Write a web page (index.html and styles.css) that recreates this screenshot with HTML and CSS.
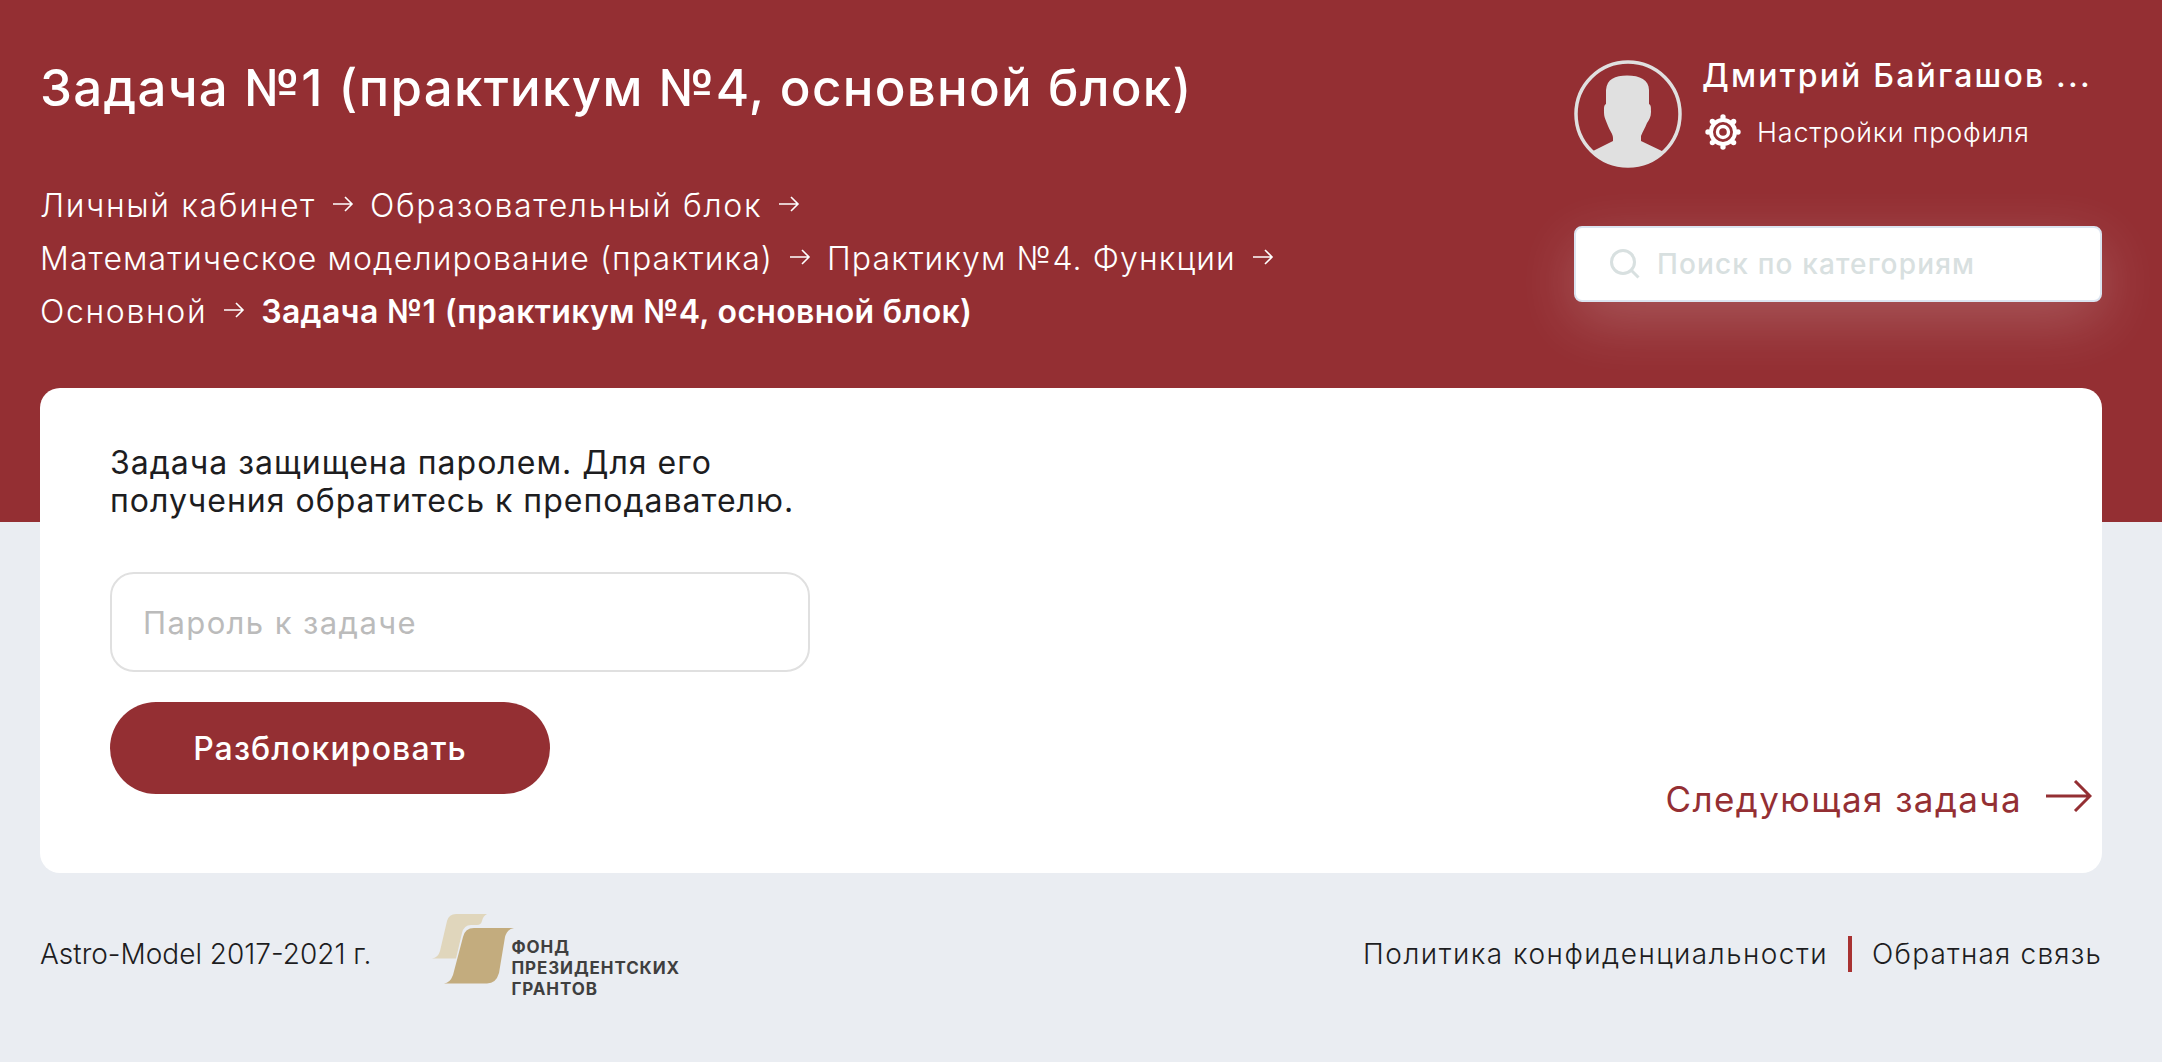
FILE: index.html
```html
<!DOCTYPE html>
<html lang="ru">
<head>
<meta charset="UTF-8" />
<meta name="viewport" content="width=device-width, initial-scale=1" />
<title>Задача №1 (практикум №4, основной блок)</title>
<link rel="stylesheet" href="styles.css">
</head>
<body>
<header class="top">
  <div class="top-left">
    <h1 class="page-title">Задача №1 (практикум №4, основной блок)</h1>
    <nav class="crumbs">
      <div class="crumb-row">
        <a class="crumb">Личный кабинет</a>
        <svg class="crumb-arrow" viewBox="0 0 22 18"><path d="M1 9h19M13 2l7 7-7 7"/></svg>
        <a class="crumb">Образовательный блок</a>
        <svg class="crumb-arrow" viewBox="0 0 22 18"><path d="M1 9h19M13 2l7 7-7 7"/></svg>
      </div>
      <div class="crumb-row crumb-row-long">
        <a class="crumb">Математическое моделирование (практика)</a>
        <svg class="crumb-arrow" viewBox="0 0 22 18"><path d="M1 9h19M13 2l7 7-7 7"/></svg>
        <a class="crumb">Практикум №4. Функции</a>
        <svg class="crumb-arrow" viewBox="0 0 22 18"><path d="M1 9h19M13 2l7 7-7 7"/></svg>
      </div>
      <div class="crumb-row">
        <a class="crumb">Основной</a>
        <svg class="crumb-arrow" viewBox="0 0 22 18"><path d="M1 9h19M13 2l7 7-7 7"/></svg>
        <span class="crumb crumb-current">Задача №1 (практикум №4, основной блок)</span>
      </div>
    </nav>
  </div>

  <div class="top-right">
    <div class="profile">
      <svg class="avatar" viewBox="0 0 108 108">
        <defs><clipPath id="avatarClip"><circle cx="54" cy="54" r="52"/></clipPath></defs>
        <path clip-path="url(#avatarClip)" d="M53 15.5C41 15.5 33 19 32 30V44C30 45 30 47 30 52C30 58 32 60 34 66C36 71 39 74 39 78V81L17 92L10 108H98L90 92L67 81V76C69 71 71 68 73 63C75 60 77 57 77 52C77 47 77 45 75 44V30C75 20 66 15.5 53 15.5Z"/>
        <circle class="avatar-ring" cx="54" cy="54" r="52"/>
      </svg>
      <div class="profile-info">
        <div class="profile-name">Дмитрий Байгашов ...</div>
        <a class="profile-link">
          <svg class="gear" viewBox="0 0 36 36">
            <circle class="gear-ring" cx="18" cy="18" r="12"/>
            <circle class="gear-ring gear-core" cx="18" cy="18" r="5.5"/>
            <g class="gear-teeth">
              <circle cx="18" cy="3" r="2.7"/><circle cx="18" cy="33" r="2.7"/>
              <circle cx="3" cy="18" r="2.7"/><circle cx="33" cy="18" r="2.7"/>
              <circle cx="7.4" cy="7.4" r="2.7"/><circle cx="28.6" cy="7.4" r="2.7"/>
              <circle cx="7.4" cy="28.6" r="2.7"/><circle cx="28.6" cy="28.6" r="2.7"/>
            </g>
          </svg>
          <span>Настройки профиля</span>
        </a>
      </div>
    </div>
    <label class="search">
      <svg class="search-icon" viewBox="0 0 30 30"><circle cx="13" cy="13" r="11.5"/><path d="M21.5 21.5l7 7"/></svg>
      <input class="search-input" type="text" placeholder="Поиск по категориям" />
    </label>
  </div>
</header>

<main class="card">
  <div class="unlock">
    <p class="unlock-text">Задача защищена паролем. Для его получения обратитесь к преподавателю.</p>
    <input class="unlock-input" type="password" placeholder="Пароль к задаче" />
    <button class="unlock-btn">Разблокировать</button>
  </div>
  <a class="next-link">
    <span>Следующая задача</span>
    <svg class="next-arrow" viewBox="0 0 46 32"><path d="M0 16h44M29 1l15 15-15 15"/></svg>
  </a>
</main>

<footer class="footer">
  <div class="footer-left">
    <span>Astro-Model 2017-2021 г.</span>
    <div class="fund">
      <svg class="fund-mark" viewBox="0 0 84 72">
        <path class="fund-light" d="M1 45.5Q7 45 9 38L16 8Q18 1 25 1H56Q52 3 51 8Q50 12 46 12H40Q33 12 31 20L25 45.5Z"/>
        <path class="fund-dark" d="M13 70.5Q19 70 22 62L32 24Q34 15 43 15H83Q76 16 74 24L68 60Q65 70.5 56 70.5Z"/>
      </svg>
      <div class="fund-name">ФОНД<br>ПРЕЗИДЕНТСКИХ<br>ГРАНТОВ</div>
    </div>
  </div>
  <div class="footer-right">
    <a class="footer-policy">Политика конфиденциальности</a>
    <span class="footer-sep"></span>
    <a>Обратная связь</a>
  </div>
</footer>
</body>
</html>
```

FILE: styles.css
```css
/* Basic reset */
* {
  box-sizing: border-box;
}

html, body {
  margin: 0;
  height: 100%;
}

body {
  font-family: Inter, "Noto Sans", Arial, sans-serif;
  color: #1d1d1f;
  background: linear-gradient(#942f33 522px, #eaedf2 522px);
}

a {
  color: inherit;
  text-decoration: none;
}

/* Red header */
.top {
  height: 388px;
  padding: 0 60px 0 40px;
  display: flex;
  justify-content: space-between;
  color: #fff;
}

.page-title {
  margin: 56px 0 0;
  font-size: 51px;
  line-height: 64px;
  font-weight: 500;
  letter-spacing: 1.28px;
}

.crumbs {
  margin-top: 59px;
  font-size: 32px;
  font-weight: 300;
  letter-spacing: 1.65px;
}

.crumb-row {
  height: 53px;
  display: flex;
  align-items: center;
  gap: 16px;
}

.crumb-row-long {
  letter-spacing: 1.1px;
}

.crumb-current {
  font-weight: 600;
  letter-spacing: 0.32px;
}

.crumb-arrow {
  width: 22px;
  height: 18px;
  margin-top: -4px;
  fill: none;
  stroke: #fff;
  stroke-width: 1.6;
}

/* Profile + search */
.top-right {
  width: 528px;
  padding-top: 60px;
}

.profile {
  display: flex;
  gap: 20px;
}

.avatar {
  width: 108px;
  height: 108px;
  fill: #e0e0e0;
}

.avatar-ring {
  fill: none;
  stroke: #e0e0e0;
  stroke-width: 3.5;
}

.profile-name {
  margin-top: -4px;
  font-size: 32px;
  line-height: 40px;
  font-weight: 500;
  letter-spacing: 2.2px;
}

.profile-link {
  margin-top: 18px;
  display: flex;
  align-items: center;
  gap: 16px;
  font-size: 27px;
  font-weight: 300;
  letter-spacing: 0.8px;
}

.gear {
  width: 36px;
  height: 36px;
  margin-left: 3px;
}

.gear-ring {
  fill: none;
  stroke: #fff;
  stroke-width: 4;
}

.gear-core {
  stroke-width: 3.4;
}

.gear-teeth {
  fill: #fff;
}

.search {
  height: 76px;
  margin-top: 58px;
  padding-left: 34px;
  display: flex;
  align-items: center;
  gap: 17px;
  background: #fff;
  border: 2px solid #dbe4f0;
  border-radius: 8px;
  box-shadow: 0 18px 60px rgba(255, 255, 255, 0.2);
}

.search-icon {
  width: 30px;
  height: 30px;
  flex-shrink: 0;
  fill: none;
  stroke: #d8e0e0;
  stroke-width: 3;
}

.search-input {
  flex-grow: 1;
  border: none;
  outline: none;
  padding: 0;
  font: 500 28px Inter, "Noto Sans", Arial, sans-serif;
  letter-spacing: 1.15px;
}

.search-input::placeholder {
  color: #d8e0e0;
  opacity: 1;
}

/* White card */
.card {
  height: 485px;
  margin: 0 60px 0 40px;
  padding: 56px 10px 50px 70px;
  display: flex;
  justify-content: space-between;
  align-items: flex-end;
  background: #fff;
  border-radius: 20px;
}

.unlock {
  width: 700px;
  align-self: flex-start;
}

.unlock-text {
  margin: 0;
  font-size: 32px;
  line-height: 38px;
  letter-spacing: 1px;
  color: #1d1d1f;
}

.unlock-input {
  display: block;
  width: 700px;
  height: 100px;
  margin-top: 52px;
  padding: 0 31px;
  border: 2px solid #e0e0e0;
  border-radius: 24px;
  outline: none;
  font: 400 31px Inter, "Noto Sans", Arial, sans-serif;
  letter-spacing: 1.4px;
}

.unlock-input::placeholder {
  color: #bbb;
  opacity: 1;
}

.unlock-btn {
  display: block;
  width: 440px;
  height: 92px;
  margin-top: 30px;
  border: none;
  border-radius: 46px;
  background: #942f33;
  color: #fff;
  font: 500 32px Inter, "Noto Sans", Arial, sans-serif;
  letter-spacing: 1.1px;
  cursor: pointer;
}

.next-link {
  margin-bottom: 2px;
  display: flex;
  align-items: center;
  gap: 24px;
  color: #942f33;
  font-size: 35px;
  line-height: 44px;
  letter-spacing: 1.4px;
}

.next-arrow {
  width: 46px;
  height: 32px;
  margin-top: -6px;
  fill: none;
  stroke: #942f33;
  stroke-width: 3;
}

/* Footer */
.footer {
  padding: 40px 60px 0 40px;
  display: flex;
  justify-content: space-between;
  align-items: center;
  font-size: 28px;
  font-weight: 300;
}

.footer-left {
  display: flex;
  align-items: center;
  gap: 60px;
}

.fund {
  height: 82px;
  display: flex;
}

.fund-mark {
  width: 84px;
  height: 72px;
  margin-right: -4px;
}

.fund-light {
  fill: #e0d6bc;
}

.fund-dark {
  fill: #c3ac7e;
}

.fund-name {
  margin-top: 24px;
  font-size: 17px;
  line-height: 21px;
  font-weight: 700;
  letter-spacing: 0.9px;
  color: #3f3f3f;
}

.footer-right {
  display: flex;
  align-items: center;
  gap: 20px;
  letter-spacing: 1.2px;
}

.footer-policy {
  letter-spacing: 1.5px;
}

.footer-sep {
  width: 4px;
  height: 36px;
  background: #a83232;
}
```
